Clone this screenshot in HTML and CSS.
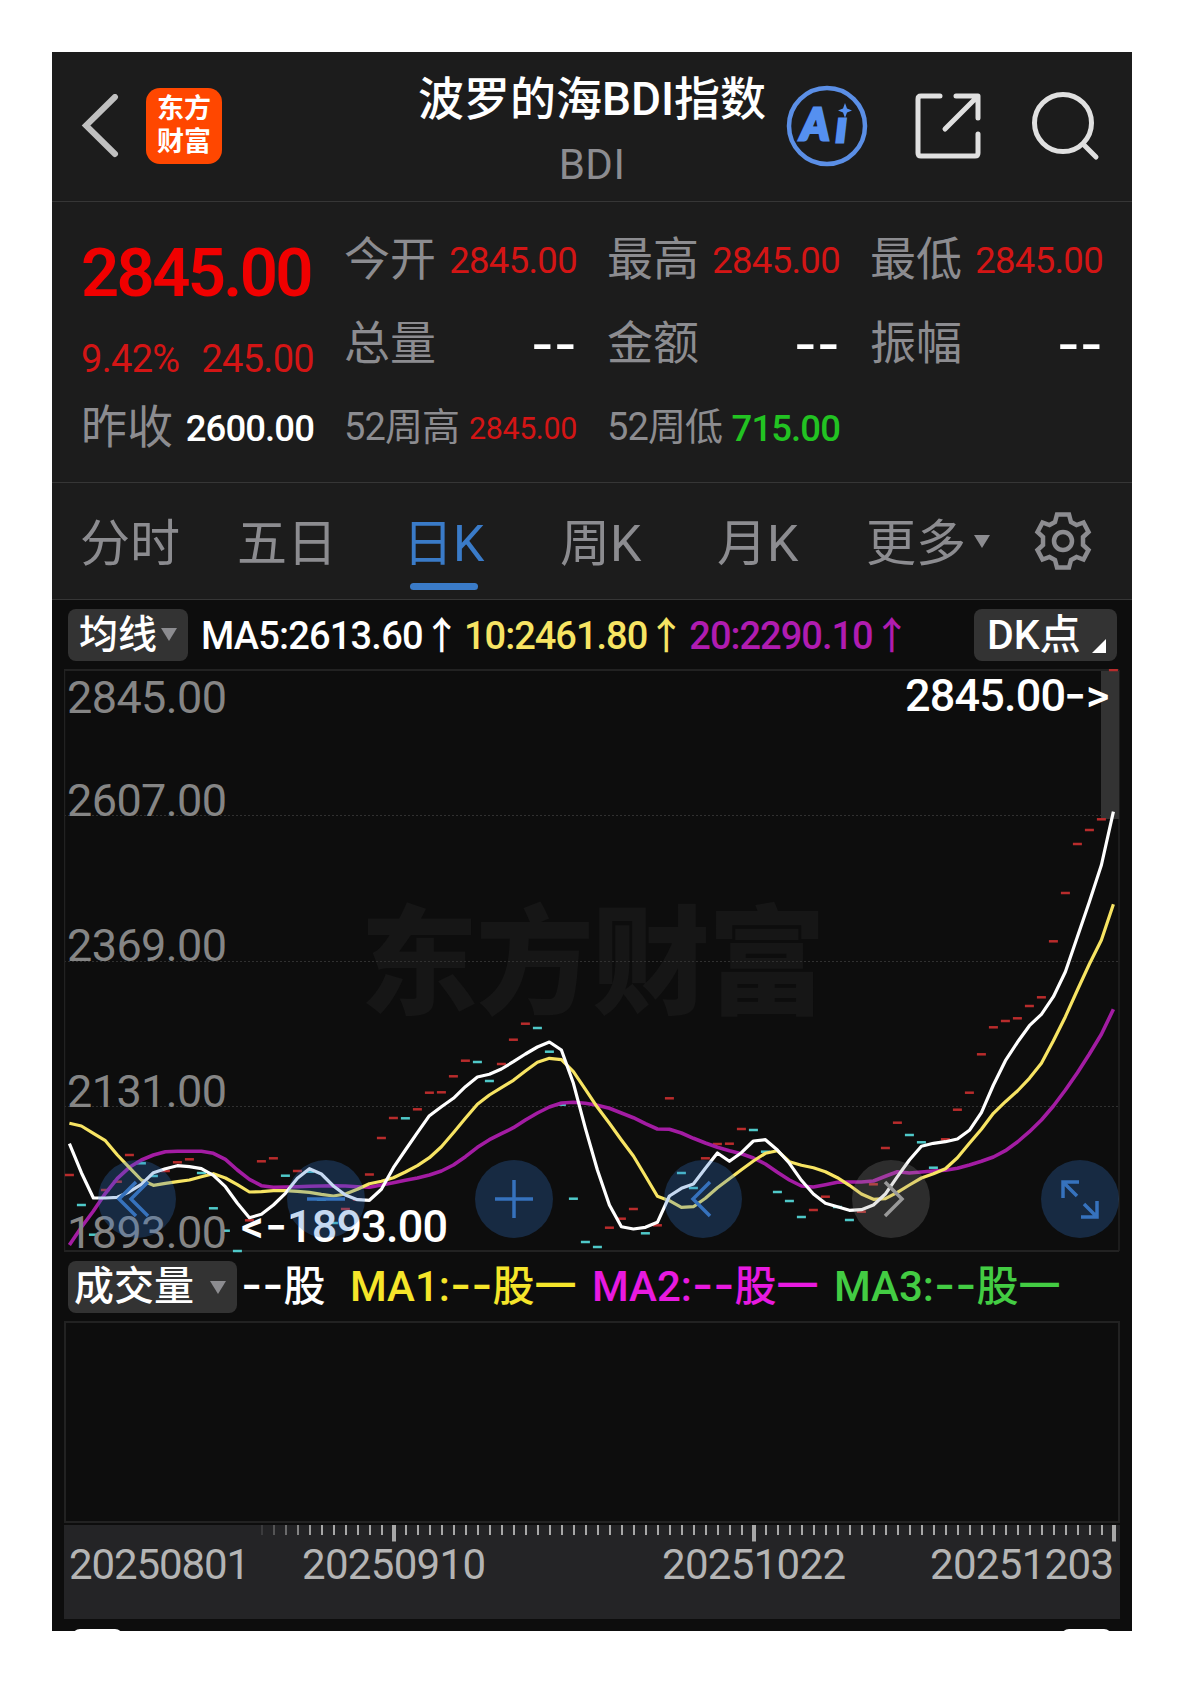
FILE: index.html
```html
<!DOCTYPE html>
<html lang="zh-CN">

<head>
    <meta charset="UTF-8">
    <meta name="viewport" content="width=device-width, initial-scale=1.0">
    <title>波罗的海BDI指数</title>
    <link rel="stylesheet" href="styles.css">
</head>

<body>
    <div class="app">
        <header class="header">
            <svg class="back" width="40" height="64" viewBox="0 0 40 64">
                <path d="M36 3 L7 31.500 L36 60" />
            </svg>
            <div class="logo"><span>东方</span><span>财富</span></div>
            <div class="title">
                <h1>波罗的海BDI指数</h1>
                <p>BDI</p>
            </div>
            <div class="actions">
                <svg class="ai" width="82" height="82" viewBox="0 0 82 82">
                    <circle cx="41" cy="41" r="38" />
                    <text x="15" y="55">A</text>
                    <text x="50" y="57">ı</text>
                    <path d="M59 18 L61 23.500 L66 25.500 L61 27.500 L59 33 L57 27.500 L52 25.500 L57 23.500 Z" />
                </svg>
                <svg class="share" width="68" height="68" viewBox="0 0 68 68">
                    <path d="M26 4 H7 Q4 4 4 7 V61 Q4 64 7 64 H61 Q64 64 64 61 V42 M42 4 H64 V26 M63 5 L31 37" />
                </svg>
                <svg class="search" width="70" height="70" viewBox="0 0 70 70">
                    <circle cx="32" cy="32" r="28.500" />
                    <path d="M52 53 L65 66" />
                </svg>
            </div>
        </header>

        <section class="quote">
            <div class="main">
                <div class="price">2845.00</div>
                <div class="change"><span>9.42%</span><span>245.00</span></div>
                <div class="cell"><label>昨收</label><b>2600.00</b></div>
            </div>
            <div class="stats">
                <div class="cell"><label>今开</label><b class="red">2845.00</b></div>
                <div class="cell"><label>最高</label><b class="red">2845.00</b></div>
                <div class="cell"><label>最低</label><b class="red">2845.00</b></div>
                <div class="cell"><label>总量</label><b class="dash">--</b></div>
                <div class="cell"><label>金额</label><b class="dash">--</b></div>
                <div class="cell"><label>振幅</label><b class="dash">--</b></div>
                <div class="cell small"><label>52周高</label><b class="red tiny">2845.00</b></div>
                <div class="cell small"><label>52周低</label><b class="green">715.00</b></div>
            </div>
        </section>

        <nav class="tabs">
            <span>分时</span>
            <span>五日</span>
            <span class="active">日K</span>
            <span>周K</span>
            <span>月K</span>
            <span>更多<i class="arrow"></i></span>
            <svg class="gear" width="60" height="64" viewBox="-30 -32 60 64">
                <path d="M-6 -26.500 H6 L8 -19 L13.500 -16 L20.500 -18.500 L25.500 -9 L20 -4 V4 L25.500 9 L20.500 18.500 L13.500 16 L8 19 L6 26.500 H-6 L-8 19 L-13.500 16 L-20.500 18.500 L-25.500 9 L-20 4 V-4 L-25.500 -9 L-20.500 -18.500 L-13.500 -16 L-8 -19 Z" />
                <circle r="9" />
            </svg>
        </nav>

        <div class="indicator">
            <div class="chip">均线<i class="arrow"></i></div>
            <span class="ma5">MA5:2613.60↑</span>
            <span class="ma10">10:2461.80↑</span>
            <span class="ma20">20:2290.10↑</span>
            <div class="chip dk">DK点<i class="corner"></i></div>
        </div>

        <div class="chart">
            <svg id="kline" width="1056" height="584" viewBox="64 669 1056 584">
                <text class="watermark" x="360" y="1005" textLength="466">东方财富</text>
                <path class="grid" d="M64 815.500 H1119 M64 961.500 H1119 M64 1106.500 H1119" />
                <path class="frame" d="M64 670 H1119 M64 1251 H1119" />
                <path class="frame side" d="M64.500 670 V1251 M1119 670 V1251" />
                <rect class="last" x="1101" y="671" width="18" height="148" />
                <g id="candles"></g>
                <polyline id="ma20" class="line" />
                <polyline id="ma10" class="line" />
                <polyline id="ma5" class="line" />
                <g class="scale">
                    <text x="67" y="712.500" textLength="160">2845.00</text>
                    <text x="67" y="815.500" textLength="160">2607.00</text>
                    <text x="67" y="960.500" textLength="160">2369.00</text>
                    <text x="67" y="1106.500" textLength="160">2131.00</text>
                    <text x="67" y="1247.500" textLength="160">1893.00</text>
                </g>
                <g class="mark">
                    <text x="905" y="711" textLength="161">2845.00</text>
                    <text class="sign" x="1064" y="711">-</text>
                    <text x="1086" y="711">&gt;</text>
                    <text x="241" y="1242">&lt;</text>
                    <text class="sign" x="265" y="1242">-</text>
                    <text x="287" y="1242" textLength="161">1893.00</text>
                </g>
            </svg>
            <div class="controls">
                <button><svg viewBox="-39 -39 78 78"><path d="M-1 -17 L-18 0 L-1 17 M11 -17 L-6 0 L11 17" /></svg></button>
                <button><svg viewBox="-39 -39 78 78"><path d="M-19 0 H19" /></svg></button>
                <button><svg viewBox="-39 -39 78 78"><path d="M-19 0 H19 M0 -19 V19" /></svg></button>
                <button><svg viewBox="-39 -39 78 78"><path d="M7 -17 L-10 0 L7 17" /></svg></button>
                <button class="off"><svg viewBox="-39 -39 78 78"><path d="M-6 -17 L11 0 L-6 17" /></svg></button>
                <button><svg viewBox="-39 -39 78 78"><path d="M-3 -3 L-17 -17 M-17 -1 V-17 H-1 M4 5 L17 18 M17 2 V18 H1" /></svg></button>
            </div>
        </div>

        <div class="indicator volume-bar">
            <div class="chip">成交量<i class="arrow"></i></div>
            <span class="vol"><em>--</em>股</span>
            <span class="v1">MA1:<em>--</em>股一</span>
            <span class="v2">MA2:<em>--</em>股一</span>
            <span class="v3">MA3:<em>--</em>股一</span>
        </div>
        <div class="volume"></div>

        <svg class="axis" width="1056" height="94" viewBox="64 1525 1056 94">
            <g id="ticks"></g>
            <text x="69" y="1579" textLength="181">20250801</text>
            <text x="302" y="1579" textLength="184">20250910</text>
            <text x="662" y="1579" textLength="184">20251022</text>
            <text x="930" y="1579" textLength="184">20251203</text>
        </svg>
        <div class="peek"><i></i><i></i></div>
    </div>

    <script>
        const STEP = 12;
        const X0 = 69.4;

        // r = up, c = down, one entry per trading day
        const candles = [
            'r1175', 'c1205', 'c1234.7', 'r1190', 'r1181.7', 'r1155', 'c1163.3', 'c1176', 'r1171', 'r1162.3',
            'r1159.3', 'c1173', 'c1208.3', 'c1230.7', 'c1251', 'r1220.3', 'r1161.3', 'r1158.3', 'c1175.7', 'r1171',
            'c1171.7', 'c1199.5', 'c1223', 'r1209', 'r1199.5', 'r1174.5', 'r1138', 'r1118', 'c1118.3', 'r1109.3',
            'r1092.7', 'r1092.3', 'r1076.3', 'r1060.7', 'c1062', 'c1081', 'r1064', 'r1039.7', 'r1023.7', 'c1028',
            'c1051.7', 'c1104.7', 'c1198.7', 'c1242', 'c1247', 'r1227.7', 'r1218.7', 'r1209', 'c1233.3', 'r1225.3',
            'r1098.3', 'c1173', 'c1188', 'r1158.3', 'r1144', 'r1143.7', 'r1129', 'c1130', 'c1151.7', 'c1192',
            'c1201', 'c1217', 'r1210', 'r1196.7', 'c1207', 'c1220', 'r1211.7', 'r1184.3', 'r1148', 'r1122.7',
            'c1135', 'c1142.3', 'c1167.7', 'r1139.3', 'r1109.7', 'r1092.7', 'r1054.3', 'r1027.3', 'r1021', 'r1018.3',
            'r1006', 'r997.3', 'r941.3', 'r893', 'r844', 'r830', 'r819.3', 'r670'
        ];

        const lines = {
            ma5: [
                1143.7, 1172.7, 1198, 1198, 1197.3, 1191.7, 1184.3, 1172.7, 1168.7, 1165.7,
                1166.7, 1168.7, 1175.3, 1186.7, 1203.3, 1217.7, 1214.3, 1205, 1193.3, 1178.3,
                1168.7, 1174, 1186, 1195, 1199.7, 1200.3, 1189.3, 1167.7, 1150, 1132.7,
                1115.7, 1106.7, 1098.3, 1086.7, 1077, 1074.3, 1069, 1061.7, 1054, 1047,
                1042, 1050, 1083.3, 1128.3, 1170, 1205, 1226.7, 1229, 1227.3, 1222.3,
                1196, 1188.3, 1184, 1168.3, 1153, 1161.3, 1152.7, 1141, 1139.7, 1150,
                1163.3, 1180.3, 1194, 1203.3, 1206.7, 1210.3, 1209.7, 1205, 1194, 1176.7,
                1160, 1146.3, 1143.3, 1141.7, 1139, 1130.3, 1112.7, 1085, 1060.7, 1042.3,
                1025.7, 1014.3, 996.7, 971.7, 936.7, 901.7, 865, 811.7
            ],
            ma10: [
                1123.3, 1126, 1133.3, 1140.7, 1155, 1167.7, 1180, 1185.3, 1183.3, 1181.7,
                1180, 1176.7, 1173.7, 1178, 1184.7, 1192, 1191.7, 1190.7, 1190.7, 1191.3,
                1192.3, 1194.3, 1196, 1194, 1189.3, 1183.7, 1181.3, 1177.7, 1172, 1165.7,
                1157.7, 1146.7, 1132.7, 1118.3, 1104.3, 1095, 1087.7, 1080.3, 1071, 1062.3,
                1058.3, 1059.7, 1071.7, 1089.3, 1107.3, 1123.3, 1140, 1156, 1176, 1196.3,
                1200.7, 1207.3, 1206.7, 1198.3, 1187.7, 1178.7, 1169.7, 1161, 1153.3, 1150.7,
                1161.7, 1165.3, 1167.7, 1171.7, 1177.7, 1185.3, 1194, 1199.3, 1198.7, 1192.3,
                1185, 1178, 1173.7, 1168.7, 1157.7, 1143.3, 1129.3, 1113.3, 1101.7, 1091,
                1078.3, 1063.3, 1040.7, 1016.7, 990, 964, 940, 904.3
            ],
            ma20: [
                1245, 1227.3, 1211, 1193.3, 1178.3, 1167.3, 1160, 1155, 1151.7, 1151.3,
                1151.3, 1151.3, 1153.3, 1159.3, 1170, 1179.3, 1185.7, 1187.3, 1187, 1186.7,
                1186.3, 1186, 1185.7, 1186, 1186.7, 1187.3, 1185, 1182.7, 1180.3, 1178,
                1175, 1171, 1165, 1156.7, 1147.3, 1139.7, 1133.7, 1127.7, 1120, 1113,
                1107, 1103, 1102.3, 1103.3, 1105.3, 1108.3, 1113, 1117.7, 1123.7, 1129,
                1129.3, 1133, 1138.3, 1143, 1147.3, 1150.7, 1153.7, 1158, 1164, 1172.3,
                1180, 1186, 1187, 1184.7, 1182.3, 1182, 1182, 1181, 1176.3, 1171.7,
                1173, 1172, 1171, 1170.3, 1168.3, 1165, 1161.3, 1157, 1150.7, 1142,
                1131.7, 1120, 1106, 1090, 1072.7, 1054, 1034.3, 1009.3
            ]
        };

        function addRect(parent, x, y, width, height, className) {
            const rect = document.createElementNS('http://www.w3.org/2000/svg', 'rect');
            rect.setAttribute('x', x);
            rect.setAttribute('y', y);
            rect.setAttribute('width', width);
            rect.setAttribute('height', height);
            rect.setAttribute('class', className);
            parent.appendChild(rect);
            return rect;
        }

        const candleGroup = document.getElementById('candles');
        candles.forEach((candle, i) => {
            const y = Number(candle.slice(1));
            addRect(candleGroup, X0 + i * STEP - 4.5, y - 1.25, 9, 2.5, candle[0] === 'r' ? 'up' : 'down');
        });

        Object.keys(lines).forEach(id => {
            const points = lines[id].map((y, i) => `${X0 + i * STEP},${y}`).join(' ');
            document.getElementById(id).setAttribute('points', points);
        });

        // the first ticks fade in
        const tickGroup = document.getElementById('ticks');
        for (let i = 16; i < 88; i++) {
            const major = i === 27 || i === 57 || i === 87;
            const x = 70 + i * STEP;
            const tick = addRect(tickGroup, major ? x - 2 : x - 1, 1525, major ? 4 : 2, major ? 16.5 : 10, 'tick');
            tick.setAttribute('opacity', Math.min(1, (i - 15) * 0.18));
        }
    </script>
</body>

</html>
```
FILE: styles.css
```css
* {
    box-sizing: border-box;
    margin: 0;
    padding: 0;
}

body {
    background-color: #ffffff;
    padding: 52px;
    font-family: Roboto, "Noto Sans CJK SC", sans-serif;
    font-weight: 500;
}

svg {
    display: block;
    fill: none;
}

.app {
    width: 1080px;
    height: 1579px;
    background-color: #0d0d0d;
    overflow: hidden;
    color: #ffffff;
}

.header {
    position: relative;
    display: flex;
    align-items: center;
    height: 150px;
    padding: 0 31px 2px 27px;
    background-color: #1c1c1c;
    border-bottom: 1px solid #363636;
}

.back {
    stroke: #c0c0c0;
    stroke-width: 6;
    stroke-linecap: round;
}

.logo {
    display: flex;
    flex-direction: column;
    justify-content: center;
    align-items: center;
    width: 76px;
    height: 76px;
    margin-left: 27px;
    border-radius: 14px;
    background-color: #ff4700;
    font-size: 27px;
    font-weight: 700;
    line-height: 33px;
}

.title {
    position: absolute;
    left: 0;
    right: 0;
    top: 17px;
    text-align: center;
}

.title h1 {
    font-size: 46px;
    font-weight: 500;
    line-height: 60px;
}

.title p {
    font-size: 42px;
    font-weight: 400;
    line-height: 71px;
    letter-spacing: 0.5px;
    color: #8c8c90;
}

.actions {
    display: flex;
    align-items: center;
    margin-left: auto;
}

.ai {
    stroke: #5b8fe6;
    stroke-width: 4.5;
    margin-right: 46px;
}

.ai text,
.ai path {
    fill: #5590f0;
    stroke: none;
}

.ai text {
    font-family: Lato, sans-serif;
    font-size: 43px;
    font-weight: 900;
    font-style: italic;
    stroke: #5590f0;
    stroke-width: 3;
}

.share {
    stroke: #e0e0e0;
    stroke-width: 5;
    stroke-linecap: round;
    stroke-linejoin: round;
    margin-right: 49px;
}

.search {
    stroke: #e0e0e0;
    stroke-width: 5;
    stroke-linecap: round;
}

.quote {
    display: flex;
    height: 281px;
    padding: 0 29px;
    background-color: #1c1c1c;
    border-bottom: 1px solid #363636;
}

.main {
    width: 233px;
    margin-right: 30px;
}

.price {
    height: 117px;
    padding-top: 31px;
    font-size: 67px;
    font-weight: 600;
    line-height: 80px;
    letter-spacing: -2.7px;
    color: #f00000;
}

.change {
    display: flex;
    justify-content: space-between;
    height: 66px;
    font-size: 38px;
    font-weight: 400;
    line-height: 80px;
    letter-spacing: -0.7px;
    color: #d31515;
}

.main .cell {
    height: 84px;
}

.stats {
    display: grid;
    grid-template-columns: 233px 233px 233px;
    grid-template-rows: 84px 84px 84px;
    column-gap: 30px;
    padding-top: 15px;
}

.cell {
    display: flex;
    justify-content: space-between;
    align-items: center;
    white-space: nowrap;
}

.cell label {
    font-size: 46px;
    font-weight: 400;
    line-height: 60px;
    color: #8c8c90;
}

.cell b {
    padding-top: 3px;
    font-size: 36.5px;
    font-weight: 500;
    letter-spacing: -0.9px;
}

.cell b.red {
    font-weight: 400;
    letter-spacing: -0.7px;
}

.cell.small label {
    font-size: 38px;
    letter-spacing: -0.9px;
}

.cell b.tiny {
    font-size: 30.5px;
    letter-spacing: -0.4px;
}

.cell b.dash {
    padding-top: 1px;
    font-family: Inter, sans-serif;
    font-size: 50px;
    letter-spacing: 0;
}

.red {
    color: #d31515;
}

.green {
    color: #22c322;
}

.tabs {
    display: grid;
    grid-template-columns: 157px 166px 157px 157px 149px 167px 60px;
    align-items: center;
    height: 117px;
    padding-left: 28px;
    background-color: #1c1c1c;
    border-bottom: 1px solid #363636;
    font-size: 50px;
    font-weight: 400;
    line-height: 110px;
    color: #8c8c90;
}

.tabs span {
    padding-top: 6px;
}

.tabs .active {
    position: relative;
    color: #3a7bc8;
}

.tabs .active::after {
    content: "";
    position: absolute;
    left: 7px;
    bottom: 9px;
    width: 68px;
    height: 7px;
    border-radius: 4px;
    background-color: #3a7bc8;
}

.arrow {
    display: inline-block;
    border: 8px solid transparent;
    border-top: 13px solid #8c8c90;
    border-bottom: 0;
    margin-left: 8px;
    vertical-align: 13px;
}

.gear {
    stroke: #8c8c90;
    stroke-width: 4.5;
}

.indicator {
    display: flex;
    align-items: center;
    height: 69px;
    padding: 0 15px 0 16px;
    font-size: 38px;
    white-space: nowrap;
}

.indicator > span {
    padding-bottom: 4px;
}

.chip {
    display: flex;
    align-items: center;
    width: 120px;
    height: 52px;
    padding-left: 11px;
    border-radius: 8px;
    background-color: #333333;
    font-size: 39px;
    line-height: 52px;
}

.chip .arrow {
    margin-left: 4px;
}

.ma5 {
    margin-left: 13px;
    letter-spacing: -0.8px;
}

.ma10 {
    margin-left: 4px;
    letter-spacing: -1px;
    color: #f7e463;
}

.ma20 {
    margin-left: 5px;
    letter-spacing: -1px;
    color: #b01cb0;
}

.chip.dk {
    width: 143px;
    margin-left: auto;
    padding-left: 13px;
    font-size: 41px;
}

.corner {
    align-self: flex-end;
    margin: 0 0 8px 11px;
    border-left: 14px solid transparent;
    border-bottom: 14px solid #ffffff;
}

.chart {
    position: relative;
    height: 584px;
    margin-left: 12px;
}

.watermark {
    fill: #161616;
    font-size: 118px;
    font-weight: 900;
}

.grid {
    stroke: #303030;
    stroke-dasharray: 2 2;
}

.frame {
    stroke: #222222;
    stroke-width: 2;
}

.frame.side {
    stroke-width: 1.5;
}

.last {
    fill: #333333;
}

.up {
    fill: #b82c2c;
}

.down {
    fill: #4fc9c9;
}

.line {
    stroke-width: 3.2;
    stroke-linejoin: round;
}

#ma5 {
    stroke: #ffffff;
}

#ma10 {
    stroke: #f7e463;
}

#ma20 {
    stroke: #a31ca3;
    stroke-width: 3.6;
}

.scale {
    fill: #858585;
    font-size: 45px;
    font-weight: 400;
}

.mark {
    fill: #ffffff;
    font-size: 45px;
}

.mark .sign {
    font-family: Inter, sans-serif;
    font-size: 48px;
}

/* floating chart buttons */
.controls {
    position: absolute;
    left: 34px;
    top: 491px;
    width: 1021px;
    display: flex;
    justify-content: space-between;
}

.controls button {
    width: 78px;
    height: 78px;
    border: 0;
    border-radius: 50%;
    background-color: rgba(52, 120, 204, 0.28);
}

.controls path {
    stroke: #3672bd;
    stroke-width: 3.5;
}

.controls .off {
    background-color: rgba(150, 150, 150, 0.24);
}

.controls .off path {
    stroke: #999999;
}

.volume-bar {
    height: 68px;
    font-size: 42px;
}

.volume-bar .chip {
    width: 169px;
    padding-left: 6px;
    font-size: 40px;
}

.volume-bar .arrow {
    margin-left: 16px;
}

.volume-bar em {
    font-family: Inter, sans-serif;
    font-style: normal;
    font-size: 46px;
}

.volume-bar span {
    width: 242px;
    line-height: 60px;
}

.volume-bar .vol {
    width: 109px;
    margin-left: 4px;
}

.v1 {
    color: #f5e52a;
}

.v2 {
    color: #e81ae0;
}

.v3 {
    color: #43cc43;
}

.volume {
    width: 1056px;
    height: 202px;
    margin-left: 12px;
    border: 2px solid #222222;
}

.axis {
    margin: 2px 0 0 12px;
    background-color: #242426;
}

.axis text {
    fill: #b4b4b4;
    font-size: 42px;
    font-weight: 400;
}

.tick {
    fill: #a8a8a8;
}

.peek {
    display: flex;
    justify-content: space-between;
    padding: 10px 20px 0;
}

.peek i {
    width: 51px;
    height: 40px;
    border-radius: 8px;
    background-color: #ffffff;
}
```
